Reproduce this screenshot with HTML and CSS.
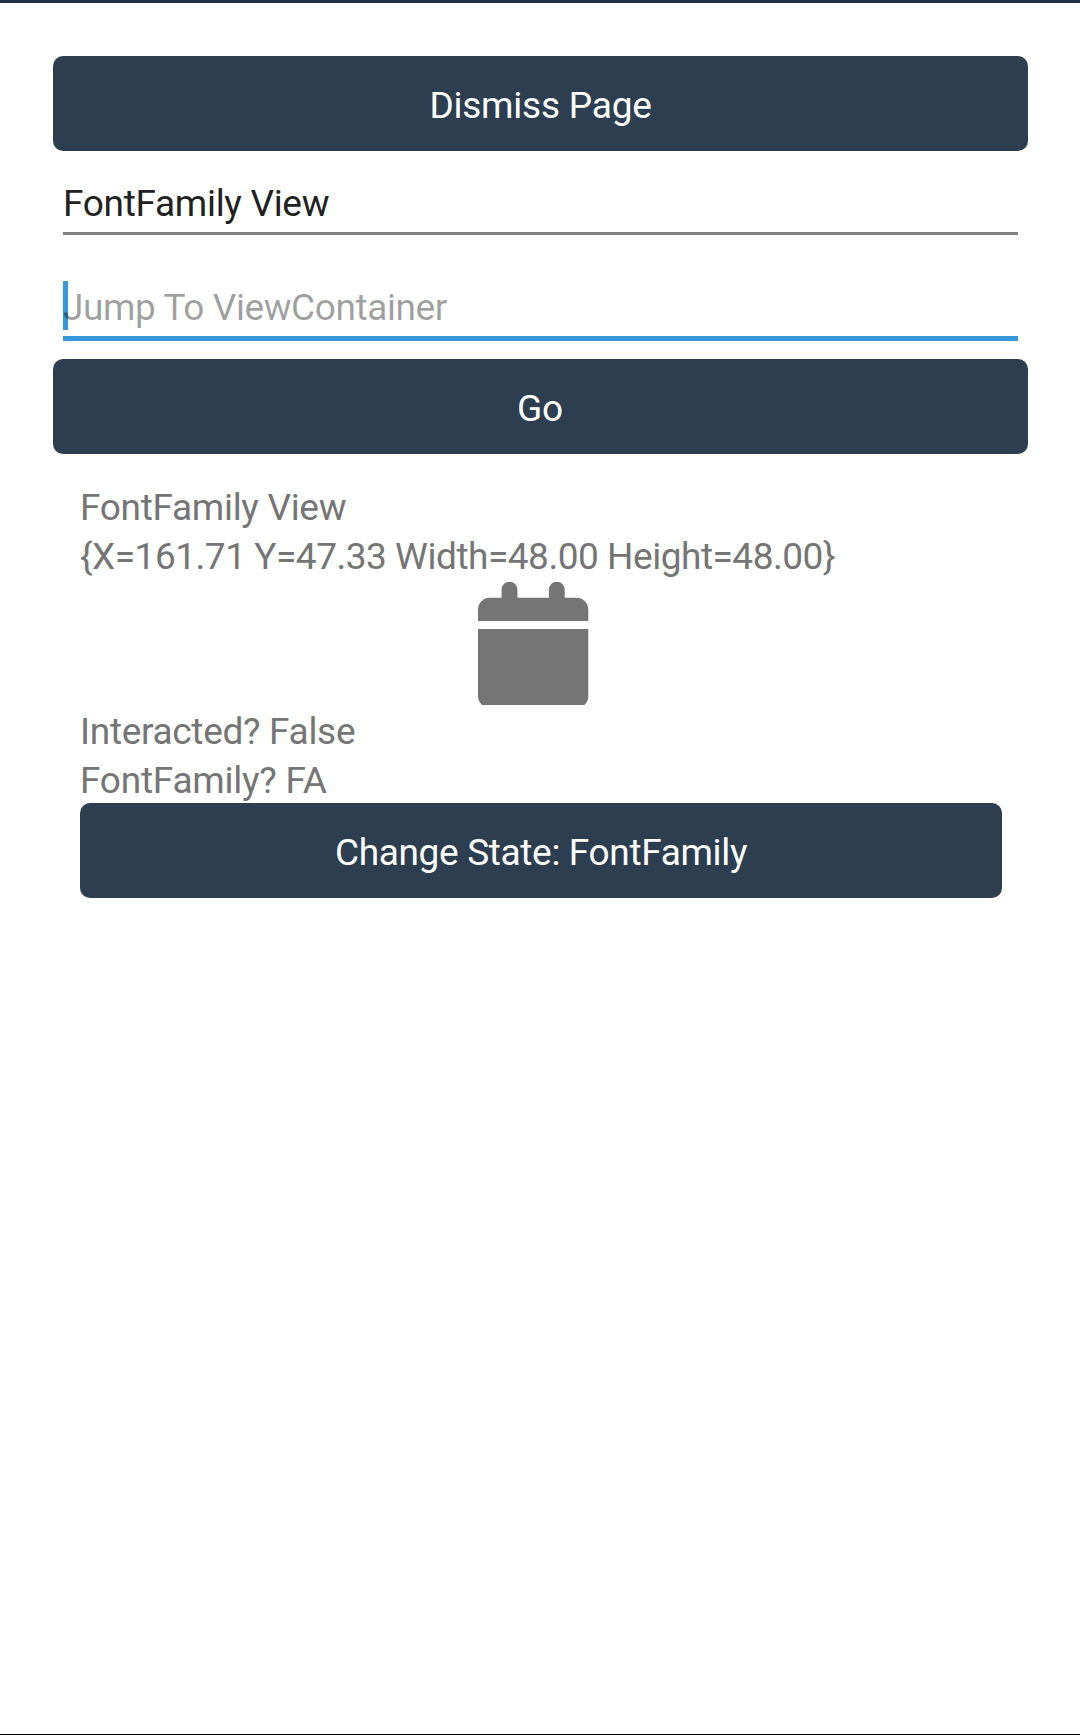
FILE: index.html
```html
<!DOCTYPE html>
<html lang="en">
<head>
<meta charset="utf-8">
<title>FontFamily View</title>
<link rel="stylesheet" href="styles.css">
</head>
<body>
<main class="page">
  <button class="button">Dismiss Page</button>
  <div class="entry">FontFamily View</div>
  <div class="entry entry-focused"><span class="caret"></span><span class="placeholder">Jump To ViewContainer</span></div>
  <button class="button button-go">Go</button>
  <section class="details">
    <div class="label">FontFamily View</div>
    <div class="label label-bounds">{X=161.71 Y=47.33 Width=48.00 Height=48.00}</div>
    <svg class="calendar" viewBox="0 0 111 123" width="111" height="123"><path d="M0 39V27.500A11.800 11.800 0 0 1 11.800 15.700H23.600V7.600a7.900 7.900 0 0 1 15.800 0V15.700H70.900V7.600a7.900 7.900 0 0 1 15.800 0V15.700H98.500A11.800 11.800 0 0 1 110.300 27.500V39ZM0 47H110.300V114A11.800 11.800 0 0 1 106.300 123H4A11.800 11.800 0 0 1 0 114Z"/></svg>
    <div class="label">Interacted? False</div>
    <div class="label label-last">FontFamily? FA</div>
    <button class="button button-state">Change State: FontFamily</button>
  </section>
</main>
</body>
</html>
```
FILE: styles.css
```css
* { box-sizing: border-box; }
body { margin: 0; background: #fff; font-family: Roboto, sans-serif; font-size: 37px; letter-spacing: -0.31px; }
.page { height: 1735px; padding: 53px 52px 0 53px; border-top: 3px solid #1b3147; border-bottom: 1px solid #000; }
.button { display: block; width: 100%; height: 95px; margin: 0; padding: 4px 0 0; border: 0; border-radius: 10px; background: #2c3e50; color: #fff; font: inherit; letter-spacing: -0.22px; line-height: 44px; }
.button-go { padding-right: 1px; }
.button-state { letter-spacing: -0.34px; }
.entry { height: 84px; margin: 0 10px; padding-top: 31px; border-bottom: 3px solid #808080; color: #212121; line-height: 44px; }
.entry-focused { position: relative; height: 106px; padding-top: 51px; margin-bottom: 18px; border-bottom: 5px solid #3498db; }
.placeholder { position: relative; color: rgba(0, 0, 0, 0.38); letter-spacing: -0.41px; }
.caret { position: absolute; left: 0; top: 46px; width: 5px; height: 49px; background: #3498db; }
.details { padding: 29px 26px 0 27px; color: #757575; }
.label { height: 49px; line-height: 49px; white-space: nowrap; }
.label-bounds { letter-spacing: -0.47px; }
.label-last { height: 47px; letter-spacing: -0.23px; }
.calendar { display: block; margin: 1px 0 2px 398px; fill: #757575; }
```
